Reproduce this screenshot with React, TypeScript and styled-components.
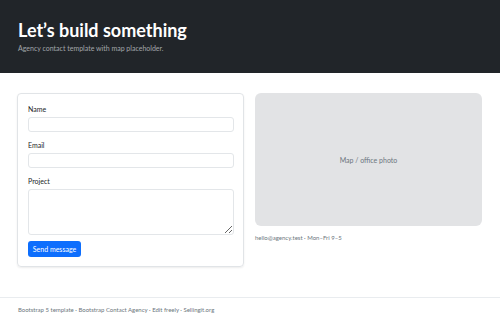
import React from "react";
import styled, { createGlobalStyle } from "styled-components";

const Global = createGlobalStyle`
  html, body { margin: 0; padding: 0; background: #fff; }
  body { font-family: Lato, "Noto Sans", sans-serif; color: #212529; }
  * { box-sizing: border-box; }
`;

const Hero = styled.header`
  background: #212529;
  padding: 19px 18px 21px;
  height: 73px;
`;

const Title = styled.h1`
  margin: 0 0 2px;
  font-size: 18px;
  line-height: 22px;
  font-weight: 700;
  color: #fff;
`;

const Subtitle = styled.p`
  margin: 0;
  font-size: 7px;
  line-height: 10px;
  color: #a3a7ab;
`;

const Main = styled.main`
  padding: 20px 18px 30px 17px;
`;

const Grid = styled.div`
  display: grid;
  grid-template-columns: 227px 227px;
  column-gap: 11px;
  align-items: start;
`;

const Card = styled.form`
  border: 1px solid #e1e4e7;
  border-radius: 4px;
  box-shadow: 0 1px 2px rgba(0, 0, 0, 0.075);
  padding: 10px 9px 9px 10px;
  display: flex;
  flex-direction: column;
  height: 174px;
`;

const Label = styled.label`
  font-size: 7px;
  line-height: 10px;
  color: #212529;
  margin-bottom: 3px;
`;

const Input = styled.input`
  height: 15px;
  border: 1px solid #e3e6e9;
  border-radius: 3px;
  margin: 0 0 8px;
  padding: 0 4px;
  font: inherit;
  font-size: 7px;
  background: #fff;
`;

const TextArea = styled.textarea`
  height: 46px;
  border: 1px solid #e3e6e9;
  border-radius: 3px;
  margin: 0 0 6px;
  padding: 2px 4px;
  font: inherit;
  font-size: 7px;
  resize: vertical;
`;

const Button = styled.button`
  align-self: flex-start;
  width: 53px;
  height: 16px;
  border: none;
  border-radius: 3px;
  background: #0d6efd;
  color: #fff;
  font-family: inherit;
  font-size: 7px;
  line-height: 16px;
  padding: 0;
`;

const Side = styled.div`
  display: flex;
  flex-direction: column;
`;

const MapBox = styled.div`
  height: 133px;
  border-radius: 6px;
  background: #e2e3e5;
  display: flex;
  align-items: center;
  justify-content: center;
  font-size: 7px;
  color: #6c757d;
`;

const Contact = styled.div`
  margin-top: 7px;
  font-size: 6px;
  line-height: 10px;
  color: #6c757d;
`;

const Footer = styled.footer`
  border-top: 1px solid #e9ecef;
  padding: 7px 18px;
  font-size: 6px;
  line-height: 10px;
  color: #6c757d;
`;

export default function App() {
  return (
    <>
      <Global />
      <Hero>
        <Title>Let’s build something</Title>
        <Subtitle>Agency contact template with map placeholder.</Subtitle>
      </Hero>
      <Main>
        <Grid>
          <Card onSubmit={(e) => e.preventDefault()}>
            <Label htmlFor="name">Name</Label>
            <Input id="name" type="text" />
            <Label htmlFor="email">Email</Label>
            <Input id="email" type="email" />
            <Label htmlFor="project">Project</Label>
            <TextArea id="project" />
            <Button type="submit">Send message</Button>
          </Card>
          <Side>
            <MapBox>Map / office photo</MapBox>
            <Contact>hello@agency.test · Mon–Fri 9–5</Contact>
          </Side>
        </Grid>
      </Main>
      <Footer>Bootstrap 5 template · Bootstrap Contact Agency · Edit freely · Sellingit.org</Footer>
    </>
  );
}
